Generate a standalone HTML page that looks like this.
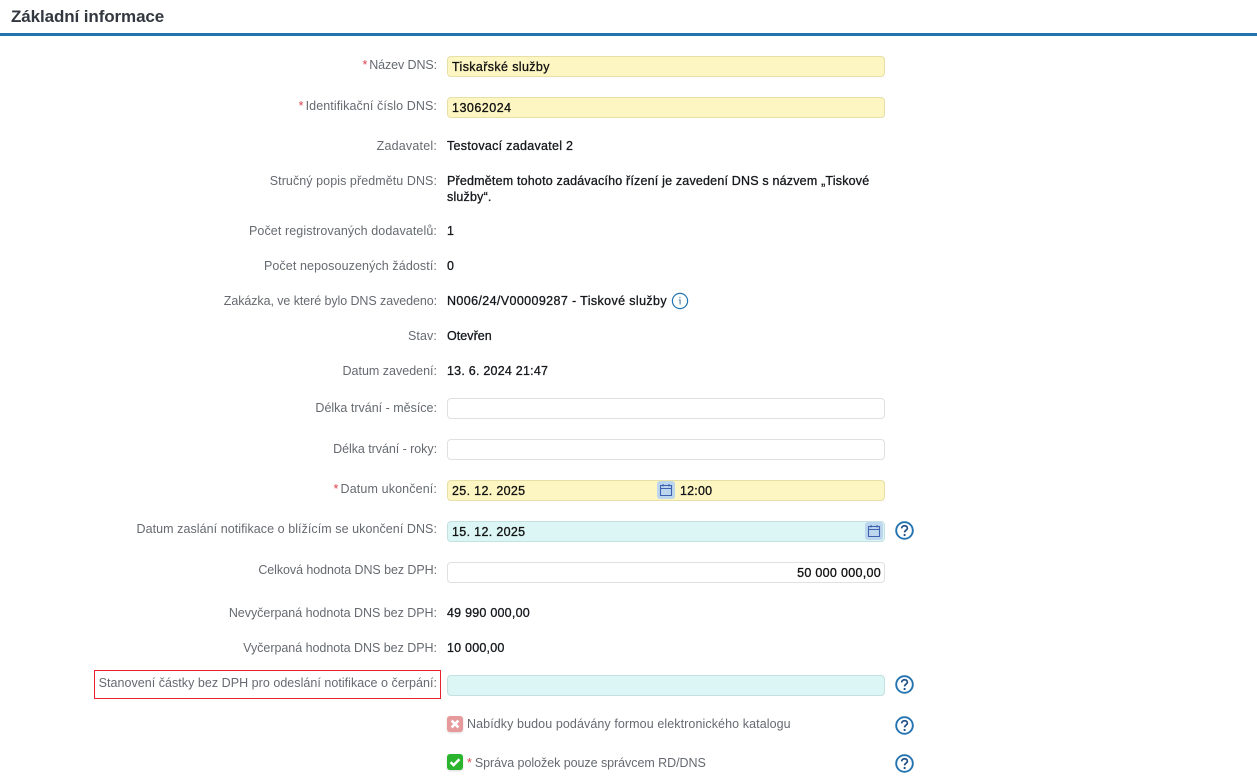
<!DOCTYPE html>
<html><head><meta charset="utf-8"><style>
html,body{margin:0;padding:0;background:#fff;width:1257px;height:780px;overflow:hidden}
body{font-family:"Liberation Sans",sans-serif;font-size:12.5px;position:relative}
.l,.v,.i,.t,.q,.c{position:absolute}
.l{right:820px;color:#666a70;white-space:nowrap;line-height:16px}
.l b{color:#d9434e;font-weight:400;margin-right:2px}
.v{left:447px;color:#15181c;white-space:nowrap;line-height:16px;-webkit-text-stroke:.3px #15181c}
.i{left:447px;width:436px;height:19px;border:1px solid #e0e0e0;border-radius:4px;background:#fff;color:#111;line-height:20px;text-indent:4px;-webkit-text-stroke:.3px #111;white-space:nowrap;letter-spacing:.33px}
.y{background:#fdf6c3;border-color:#e6dfa6}
.b{background:#dcf5f5;border-color:#c4e0e0}
.q{left:895px;width:19px;height:19px}
.c{width:16px;height:16px;filter:drop-shadow(0 1px 1px rgba(0,0,0,.15))}
</style></head><body>
<div style="position:absolute;left:11px;top:7px;font-size:17px;letter-spacing:-.1px;font-weight:700;color:#333840;line-height:20px">Základní informace</div>
<div style="position:absolute;left:0;top:33px;width:1257px;height:3px;background:#2273b0"></div>

<div class="l" style="top:57px;letter-spacing:-.1px"><b>*</b>Název DNS:</div>
<div class="i y" style="top:56px;letter-spacing:.37px">Tiskařské služby</div>
<div class="l" style="top:98px;letter-spacing:.09px"><b>*</b>Identifikační číslo DNS:</div>
<div class="i y" style="top:97px;letter-spacing:.5px">13062024</div>
<div class="l" style="top:138px;letter-spacing:.2px">Zadavatel:</div>
<div class="v" style="top:138px;letter-spacing:.29px">Testovací zadavatel 2</div>
<div class="l" style="top:173px;letter-spacing:.07px">Stručný popis předmětu DNS:</div>
<div class="v" style="top:173px;letter-spacing:.19px">Předmětem tohoto zadávacího řízení je zavedení DNS s názvem „Tiskové<br>služby“.</div>
<div class="l" style="top:223px;letter-spacing:.1px">Počet registrovaných dodavatelů:</div>
<div class="v" style="top:223px">1</div>
<div class="l" style="top:258px;letter-spacing:.1px">Počet neposouzených žádostí:</div>
<div class="v" style="top:258px">0</div>
<div class="l" style="top:293px;letter-spacing:-.08px">Zakázka, ve které bylo DNS zavedeno:</div>
<div class="v" style="top:293px;letter-spacing:.38px">N006/24/V00009287 - Tiskové služby</div>
<svg style="position:absolute;left:671px;top:292px" width="18" height="18" viewBox="0 0 18 18"><circle cx="9" cy="9" r="7.6" fill="none" stroke="#2273b0" stroke-width="1.2"/><path d="M8.9 4.9v1.2M7.8 7.9h1.3v4.6" fill="none" stroke="#5a7f9c" stroke-width="1.1"/></svg>
<div class="l" style="top:328px;letter-spacing:.1px">Stav:</div>
<div class="v" style="top:328px;letter-spacing:.05px">Otevřen</div>
<div class="l" style="top:363px">Datum zavedení:</div>
<div class="v" style="top:363px;letter-spacing:.23px">13. 6. 2024 21:47</div>
<div class="l" style="top:400px">Délka trvání - měsíce:</div>
<div class="i" style="top:398px"></div>
<div class="l" style="top:441px;letter-spacing:-.05px">Délka trvání - roky:</div>
<div class="i" style="top:439px"></div>
<div class="l" style="top:481px;letter-spacing:.13px"><b>*</b>Datum ukončení:</div>
<div class="i y" style="top:480px">25. 12. 2025</div>
<svg style="position:absolute;left:657px;top:481px" width="18" height="18" viewBox="0 0 18 18"><rect width="18" height="18" rx="3" fill="#bcd6ee"/><path d="M3.5 4.5h11v10h-11zM3.5 7.5h11M6 3v2.5M12 3v2.5" fill="none" stroke="#3f62b0" stroke-width="1.1"/></svg>
<div class="v" style="left:680px;top:483px;-webkit-text-stroke:.3px #111;letter-spacing:.2px">12:00</div>
<div class="l" style="top:521px;letter-spacing:.06px">Datum zaslání notifikace o blížícím se ukončení DNS:</div>
<div class="i b" style="top:521px">15. 12. 2025</div>
<svg style="position:absolute;left:865px;top:522px" width="18" height="18" viewBox="0 0 18 18"><rect width="18" height="18" rx="3" fill="#bcd6ee"/><path d="M3.5 4.5h11v10h-11zM3.5 7.5h11M6 3v2.5M12 3v2.5" fill="none" stroke="#3f62b0" stroke-width="1.1"/></svg>
<svg class="q" style="top:521px" viewBox="0 0 19 19"><circle cx="9.5" cy="9.5" r="8.3" fill="none" stroke="#2273b0" stroke-width="1.9"/><path d="M6.7 7.4c0-3.5 5.7-3.5 5.7-.2 0 2-2.8 2-2.8 4.2" fill="none" stroke="#1f4f86" stroke-width="1.7"/><circle cx="9.6" cy="14" r="1.1" fill="#1f4f86"/></svg>
<div class="l" style="top:562px;letter-spacing:-.07px">Celková hodnota DNS bez DPH:</div>
<div class="i" style="top:562px;text-align:right;text-indent:0;width:433px;padding-right:3px;letter-spacing:.3px">50 000 000,00</div>
<div class="l" style="top:605px;letter-spacing:-.03px">Nevyčerpaná hodnota DNS bez DPH:</div>
<div class="v" style="top:605px;letter-spacing:.23px">49 990 000,00</div>
<div class="l" style="top:640px;letter-spacing:-.03px">Vyčerpaná hodnota DNS bez DPH:</div>
<div class="v" style="top:640px;letter-spacing:.22px">10 000,00</div>
<div style="position:absolute;left:94px;top:670px;width:345px;height:27px;border:1px solid #e8222e"></div>
<div class="l" style="top:675px;letter-spacing:.035px">Stanovení částky bez DPH pro odeslání notifikace o čerpání:</div>
<div class="i b" style="top:675px"></div>
<svg class="q" style="top:675px" viewBox="0 0 19 19"><circle cx="9.5" cy="9.5" r="8.3" fill="none" stroke="#2273b0" stroke-width="1.9"/><path d="M6.7 7.4c0-3.5 5.7-3.5 5.7-.2 0 2-2.8 2-2.8 4.2" fill="none" stroke="#1f4f86" stroke-width="1.7"/><circle cx="9.6" cy="14" r="1.1" fill="#1f4f86"/></svg>
<svg class="c" style="left:447px;top:716px" viewBox="0 0 16 16"><rect width="16" height="16" rx="3" fill="#e69a9c"/><path d="M4.6 4.6l6.8 6.8M11.4 4.6l-6.8 6.8" stroke="#fff" stroke-width="2.6"/></svg>
<div class="l" style="left:467px;right:auto;top:716px;letter-spacing:.09px">Nabídky budou podávány formou elektronického katalogu</div>
<svg class="q" style="top:716px" viewBox="0 0 19 19"><circle cx="9.5" cy="9.5" r="8.3" fill="none" stroke="#2273b0" stroke-width="1.9"/><path d="M6.7 7.4c0-3.5 5.7-3.5 5.7-.2 0 2-2.8 2-2.8 4.2" fill="none" stroke="#1f4f86" stroke-width="1.7"/><circle cx="9.6" cy="14" r="1.1" fill="#1f4f86"/></svg>
<svg class="c" style="left:447px;top:754px" viewBox="0 0 16 16"><rect width="16" height="16" rx="3" fill="#2bb52f"/><path d="M3.6 8.2l3 2.9 5.8-5.8" fill="none" stroke="#fff" stroke-width="2.5"/></svg>
<div class="l" style="left:467px;right:auto;top:755px;letter-spacing:-.05px"><b style="margin-right:3px">*</b>Správa položek pouze správcem RD/DNS</div>
<svg class="q" style="top:754px" viewBox="0 0 19 19"><circle cx="9.5" cy="9.5" r="8.3" fill="none" stroke="#2273b0" stroke-width="1.9"/><path d="M6.7 7.4c0-3.5 5.7-3.5 5.7-.2 0 2-2.8 2-2.8 4.2" fill="none" stroke="#1f4f86" stroke-width="1.7"/><circle cx="9.6" cy="14" r="1.1" fill="#1f4f86"/></svg>
</body></html>
